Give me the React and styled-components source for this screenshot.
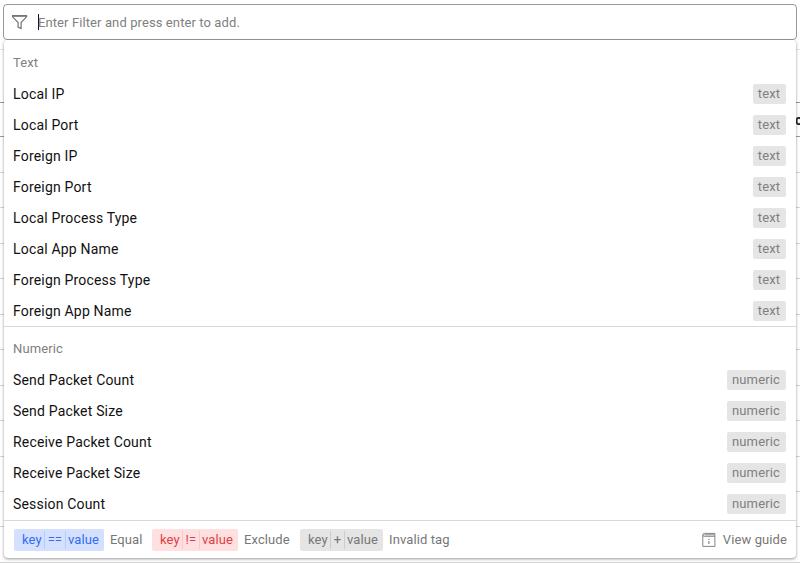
import React from 'react';
import styled, { createGlobalStyle, css } from 'styled-components';

const GlobalStyle = createGlobalStyle`
  * { box-sizing: border-box; }
  body {
    margin: 0;
    background: #fff;
    font-family: Roboto, "Liberation Sans", sans-serif;
    overflow: hidden;
  }
`;

const Page = styled.div`
  position: relative;
  width: 800px;
  height: 563px;
  overflow: hidden;
  background: #fff;
`;

const SearchArea = styled.header`
  height: 50px;
  padding: 4px 3px 0;
  border-bottom: 1px solid #e4e4e4;
`;

const SearchBox = styled.div`
  display: flex;
  align-items: center;
  height: 36px;
  padding-left: 8px;
  border: 1px solid #999;
  border-radius: 4px;
  background: #fff;
`;

const Caret = styled.span`
  width: 1px;
  height: 16px;
  margin-left: 10px;
  background: #111;
`;

const Placeholder = styled.span`
  padding-top: 1px;
  margin-left: -1px;
  font-size: 13px;
  line-height: 16px;
  letter-spacing: 0.1px;
  color: #808080;
`;

const Toolbar = styled.div`
  height: 53px;
  border-bottom: 1px solid #999;
`;

const HeadRow = styled.div`
  display: flex;
  justify-content: flex-end;
  align-items: center;
  height: 34px;
  border-bottom: 1px solid #999;
  font-size: 14px;
  font-weight: 700;
  color: #222;
`;

const HeadCell = styled.span`
  width: 5px;
  white-space: nowrap;
`;

const BodyRow = styled.div`
  height: 35.45px;
  border-bottom: 1px solid #d4d4d4;

  &:first-child { height: 36px; }
`;

const TableBody = styled.div`
  height: 426px;
`;

const Menu = styled.div`
  position: absolute;
  top: 40px;
  left: 4px;
  width: 792px;
  height: 518px;
  display: flex;
  flex-direction: column;
  background: #fff;
  border-radius: 4px;
  box-shadow: 0 1px 3px rgba(0, 0, 0, 0.42);
`;

const Group = styled.section`
  height: ${(p) => p.$height}px;
  border-bottom: 1px solid #d8d8d8;
`;

const GroupTitle = styled.div`
  height: ${(p) => p.$height}px;
  padding: ${(p) => p.$height - 24}px 9px 0;
  font-size: 13px;
  line-height: 17px;
  letter-spacing: 0.12px;
  color: #808080;
`;

const Option = styled.div`
  display: flex;
  align-items: center;
  justify-content: space-between;
  height: 31px;
  padding: 0 10.5px 0 9px;
  font-size: 14px;
  line-height: 18px;
  letter-spacing: 0.18px;
  color: #111;
`;

const TypeTag = styled.span`
  display: flex;
  align-items: center;
  justify-content: center;
  width: ${(p) => (p.$type === 'text' ? 33 : 59)}px;
  height: 20px;
  border-radius: 2px;
  background: #e5e5e5;
  font-size: 13px;
  letter-spacing: 0.15px;
  color: #808080;
`;

const Footer = styled.footer`
  display: flex;
  align-items: center;
  flex: 1;
  padding: 0 9px 0 10px;
  font-size: 13px;
  letter-spacing: 0.1px;
  color: #777;
`;

const tones = {
  blue: css`background: #d5e0ff; color: #326df0; --line: #afd0ff;`,
  red: css`background: #ffe0e0; color: #dd3f46; --line: #ffc6c9;`,
  gray: css`background: #e5e5e5; color: #777; --line: #ccc;`,
};

const Chip = styled.span`
  display: flex;
  align-items: center;
  justify-content: space-between;
  width: ${(p) => p.$width}px;
  height: 22px;
  padding: 0 5px 0 8px;
  border-radius: 2px;
  ${(p) => tones[p.$tone]}
`;

const Operator = styled.span`
  display: flex;
  align-items: center;
  justify-content: center;
  flex: 1;
  height: 18px;
  margin: 0 2px;
  border-left: 1px solid var(--line);
  border-right: 1px solid var(--line);
`;

const Meaning = styled.span`
  width: ${(p) => p.$width}px;
  padding-left: 6px;
  white-space: nowrap;
`;

const Guide = styled.div`
  display: flex;
  align-items: center;
  gap: 7px;
  margin-left: auto;
`;

const FilterIcon = () => (
  <svg width="16" height="16" viewBox="0 0 16 16" fill="none" stroke="#777" strokeWidth="1.2">
    <path d="M0.6 1.6H14.6V2.8L9.1 8.6V14.6L6.1 13.1V8.6L0.6 2.8Z" />
    <path d="M.6 2.4H14.6" strokeWidth=".9" />
  </svg>
);

const GuideIcon = () => (
  <svg width="14" height="16" viewBox="0 0 14 16" fill="none" stroke="#858585" strokeWidth="1">
    <path d="M.8 3V14.4H12.9V4.3H2.2Q.8 4.3 .8 3Q.8 1.4 2.4 1.4H12.9V4.3M2.4 2.8H12.6" />
    <path d="M6.9 6.7V7.9M6.9 8.9V12.1" strokeWidth="1.2" />
  </svg>
);

const groups = [
  {
    title: 'Text',
    type: 'text',
    height: 287,
    titleHeight: 38,
    items: ['Local IP', 'Local Port', 'Foreign IP', 'Foreign Port', 'Local Process Type', 'Local App Name', 'Foreign Process Type', 'Foreign App Name'],
  },
  {
    title: 'Numeric',
    type: 'numeric',
    height: 194,
    titleHeight: 37,
    items: ['Send Packet Count', 'Send Packet Size', 'Receive Packet Count', 'Receive Packet Size', 'Session Count'],
  },
];

const legend = [
  { tone: 'blue', op: '==', width: 90, label: 'Equal', labelWidth: 48 },
  { tone: 'red', op: '!=', width: 86, label: 'Exclude', labelWidth: 62 },
  { tone: 'gray', op: '+', width: 83, label: 'Invalid tag', labelWidth: 70 },
];

export default function App() {
  return (
    <Page>
      <GlobalStyle />
      <SearchArea>
        <SearchBox>
          <FilterIcon />
          <Caret />
          <Placeholder>Enter Filter and press enter to add.</Placeholder>
        </SearchBox>
      </SearchArea>
      <Toolbar />
      <HeadRow><HeadCell>c</HeadCell></HeadRow>
      <TableBody>
        {Array.from({ length: 12 }, (_, i) => <BodyRow key={i} />)}
      </TableBody>
      <Menu>
        {groups.map((g) => (
          <Group key={g.title} $height={g.height}>
            <GroupTitle $height={g.titleHeight}>{g.title}</GroupTitle>
            {g.items.map((item) => (
              <Option key={item}>
                {item}
                <TypeTag $type={g.type}>{g.type}</TypeTag>
              </Option>
            ))}
          </Group>
        ))}
        <Footer>
          {legend.map((l) => (
            <React.Fragment key={l.tone}>
              <Chip $tone={l.tone} $width={l.width}>
                key<Operator>{l.op}</Operator>value
              </Chip>
              <Meaning $width={l.labelWidth}>{l.label}</Meaning>
            </React.Fragment>
          ))}
          <Guide><GuideIcon />View guide</Guide>
        </Footer>
      </Menu>
    </Page>
  );
}
